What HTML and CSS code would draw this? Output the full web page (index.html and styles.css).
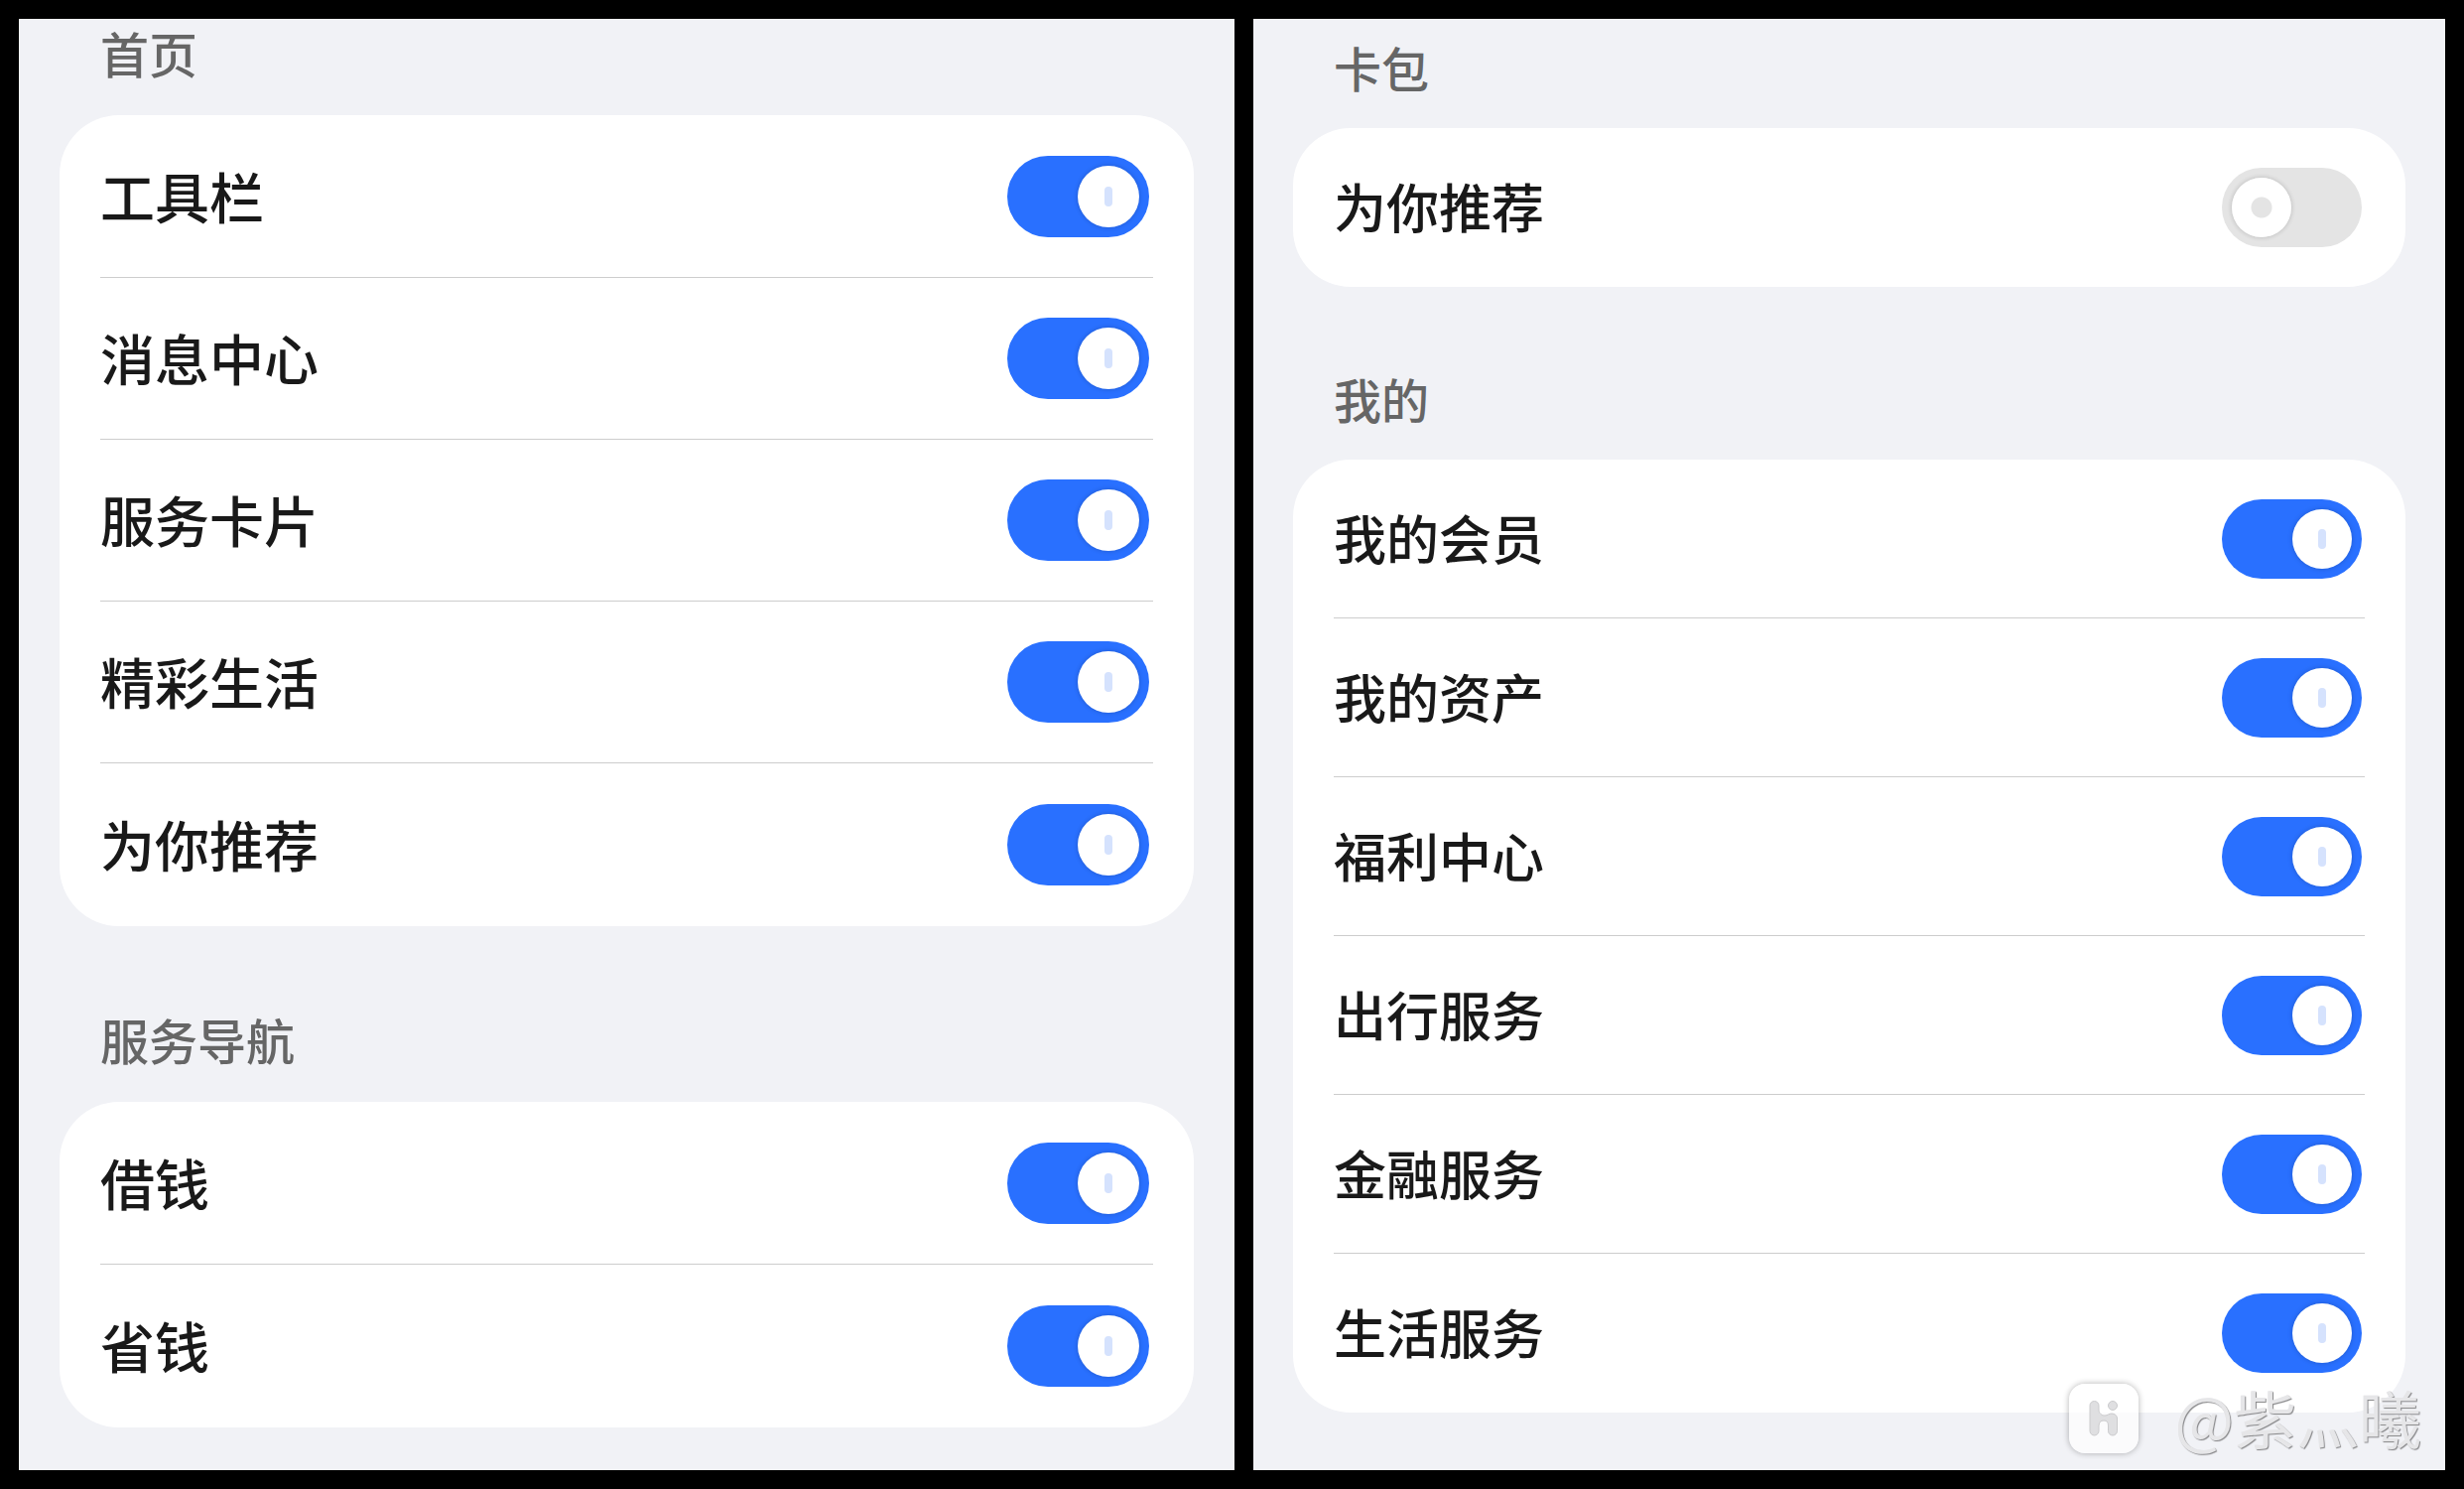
FILE: index.html
```html
<!DOCTYPE html>
<html lang="zh-CN">
<head>
    <meta charset="UTF-8">
    <meta name="viewport" content="width=device-width, initial-scale=1.0">
    <title>首页设置</title>
    <link rel="stylesheet" href="styles.css">
</head>
<body>
    <main class="screens">
        <div class="screen screen-home">
            <section class="group">
                <h2>首页</h2>
                <div class="card">
                    <div class="row">
                        <label for="toolbar">工具栏</label>
                        <input type="checkbox" class="switch" id="toolbar" checked>
                    </div>
                    <div class="row">
                        <label for="messages">消息中心</label>
                        <input type="checkbox" class="switch" id="messages" checked>
                    </div>
                    <div class="row">
                        <label for="serviceCards">服务卡片</label>
                        <input type="checkbox" class="switch" id="serviceCards" checked>
                    </div>
                    <div class="row">
                        <label for="life">精彩生活</label>
                        <input type="checkbox" class="switch" id="life" checked>
                    </div>
                    <div class="row">
                        <label for="homeRecommend">为你推荐</label>
                        <input type="checkbox" class="switch" id="homeRecommend" checked>
                    </div>
                </div>
            </section>

            <section class="group">
                <h2>服务导航</h2>
                <div class="card">
                    <div class="row">
                        <label for="borrow">借钱</label>
                        <input type="checkbox" class="switch" id="borrow" checked>
                    </div>
                    <div class="row">
                        <label for="save">省钱</label>
                        <input type="checkbox" class="switch" id="save" checked>
                    </div>
                </div>
            </section>
        </div>

        <div class="screen screen-mine">
            <section class="group">
                <h2>卡包</h2>
                <div class="card">
                    <div class="row">
                        <label for="cardRecommend">为你推荐</label>
                        <input type="checkbox" class="switch" id="cardRecommend">
                    </div>
                </div>
            </section>

            <section class="group">
                <h2>我的</h2>
                <div class="card">
                    <div class="row">
                        <label for="member">我的会员</label>
                        <input type="checkbox" class="switch" id="member" checked>
                    </div>
                    <div class="row">
                        <label for="assets">我的资产</label>
                        <input type="checkbox" class="switch" id="assets" checked>
                    </div>
                    <div class="row">
                        <label for="welfare">福利中心</label>
                        <input type="checkbox" class="switch" id="welfare" checked>
                    </div>
                    <div class="row">
                        <label for="travel">出行服务</label>
                        <input type="checkbox" class="switch" id="travel" checked>
                    </div>
                    <div class="row">
                        <label for="finance">金融服务</label>
                        <input type="checkbox" class="switch" id="finance" checked>
                    </div>
                    <div class="row">
                        <label for="lifeService">生活服务</label>
                        <input type="checkbox" class="switch" id="lifeService" checked>
                    </div>
                </div>
            </section>

            <!-- Author mark over the bottom corner -->
            <div class="watermark">
                <svg class="watermark-logo" viewBox="0 0 70 70" aria-hidden="true">
                    <g fill="#dfdfe1" stroke="#cbcbcd" stroke-width="1">
                        <path d="M21 22a4.500 4.500 0 0 1 9 0v4c0 4 3 6 6 6 3 0 4-2 7-2 3 0 5.500 2 5.500 5v12.500a4.500 4.500 0 0 1-9 0v-5.500q0-5-4.500-5T30 42v5.500a4.500 4.500 0 0 1-9 0z"/>
                        <circle cx="44" cy="22" r="4.500"/>
                    </g>
                </svg>
                <span>@紫灬曦</span>
            </div>
        </div>
    </main>
</body>
</html>
```

FILE: styles.css
```css
* { box-sizing: border-box; }

body {
    margin: 0;
    background: #000;
    color: #191919;
    font-family: "Noto Sans CJK SC", sans-serif;
}

.screens {
    display: grid;
    grid-template-columns: 1225fr 1201fr;
    gap: 19px;
    min-height: 100vh;
    padding: 19px;
}

.screen { position: relative; background: #f1f2f6; }

.screen-home {
    --row: 163px;
    --label: 55px;
    --title: 49px;
    --title-gap: 33px;
    --group-gap: 84px;
    --switch-w: 143px;
    --switch-h: 82px;
    --switch-gap: 4px;
    --radius: 60px;
    padding: 4px 41px 30px;
}

.screen-mine {
    --row: 160px;
    --label: 53px;
    --title: 48px;
    --title-gap: 32px;
    --group-gap: 82px;
    --switch-w: 141px;
    --switch-h: 80px;
    --switch-gap: 3px;
    --radius: 58px;
    padding: 18px 40px 30px;
}

.group + .group { margin-top: var(--group-gap); }

h2 {
    margin: 0 41px var(--title-gap);
    color: #666;
    font-size: var(--title);
    font-weight: 500;
    line-height: 60px;
}

.card { padding: 0 41px; background: #fff; border-radius: var(--radius); }
.screen-home .card { padding: 1px 41px; }

.row {
    display: flex;
    align-items: center;
    justify-content: space-between;
    height: var(--row);
    padding-right: var(--switch-gap);
}

.row:not(:last-child) {
    border-bottom: 1px solid #cdcdcd;
}

.row label {
    padding-bottom: 4px;
    font-size: var(--label);
    font-weight: 500;
    line-height: 80px;
}

/* Switches */
.switch {
    appearance: none;
    position: relative;
    flex: none;
    width: var(--switch-w);
    height: var(--switch-h);
    margin: 0;
    border-radius: 41px;
    background: #e4e4e4;
    cursor: pointer;
}

.switch::before {
    content: "";
    position: absolute;
    top: 10px;
    left: 10px;
    width: calc(var(--switch-h) - 20px);
    height: calc(var(--switch-h) - 20px);
    border-radius: 50%;
    background: radial-gradient(circle, #e4e4e4 10px, #fff 11px);
    box-shadow: 0 0 5px rgba(0, 0, 0, 0.2);
}

.switch:checked { background: #2970ff; }
.switch:checked::before { left: auto; right: 10px; background: #fff; }

.switch:checked::after {
    content: "";
    position: absolute;
    top: calc(var(--switch-h) / 2 - 10px);
    right: calc(var(--switch-h) / 2 - 4px);
    width: 8px;
    height: 20px;
    border-radius: 4px;
    background: #d5e2fd;
}

/* Watermark */
.watermark {
    position: absolute;
    right: 24px;
    bottom: 17px;
    display: flex;
    align-items: center;
    gap: 36px;
    color: #e6e6e8;
    font-size: 63px;
    line-height: 66px;
    text-shadow: 1px 1px 1px #858587;
    pointer-events: none;
}

.watermark span { padding-bottom: 4px; }

.watermark-logo {
    width: 70px;
    height: 70px;
    border-radius: 16px;
    background: rgba(255, 255, 255, 0.7);
    box-shadow: 0 0 6px rgba(0, 0, 0, 0.3);
}
```
